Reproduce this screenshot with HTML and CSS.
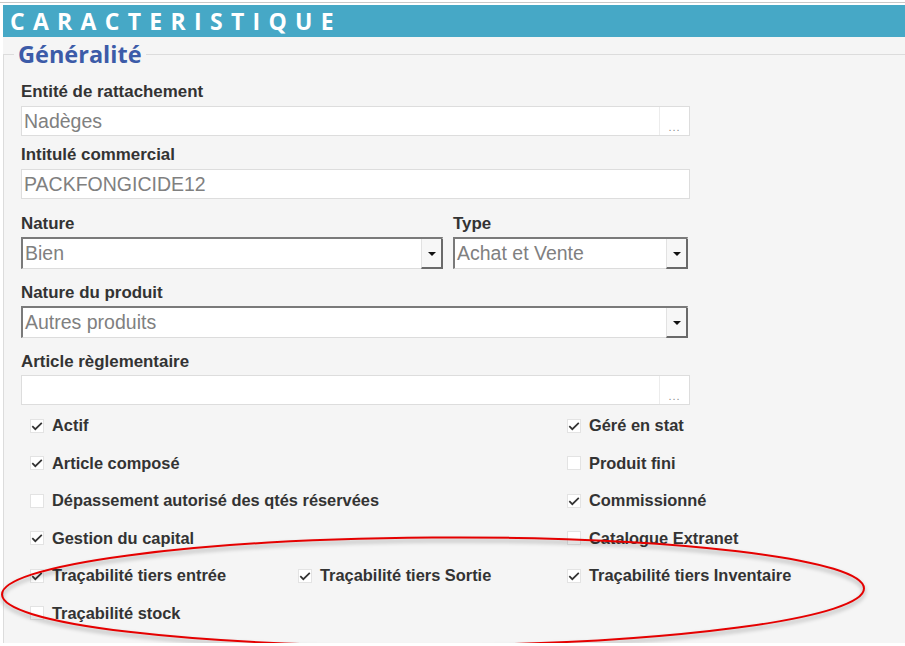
FILE: index.html
```html
<!DOCTYPE html>
<html lang="fr">
<head>
  <meta charset="UTF-8" />
  <title>Caractéristique</title>
  <link rel="stylesheet" href="styles.css">
</head>
<body>
  <div class="frame">
    <div class="titlebar">CARACTERISTIQUE</div>

    <div class="panel">
      <fieldset class="group">
        <legend>Généralité</legend>

        <div class="field f-entity">
          <label class="lbl">Entité de rattachement</label>
          <div class="textbox picker">
            <span class="val">Nadèges</span>
            <span class="dots">...</span>
          </div>
        </div>

        <div class="field f-name">
          <label class="lbl">Intitulé commercial</label>
          <div class="textbox"><span class="val">PACKFONGICIDE12</span></div>
        </div>

        <div class="field-row">
          <div class="field">
            <label class="lbl lbl-combo">Nature</label>
            <div class="combo w-nature">
              <span class="val">Bien</span>
              <span class="arrow"></span>
            </div>
          </div>
          <div class="field">
            <label class="lbl lbl-combo">Type</label>
            <div class="combo w-type">
              <span class="val">Achat et Vente</span>
              <span class="arrow"></span>
            </div>
          </div>
        </div>

        <div class="field f-product">
          <label class="lbl lbl-combo">Nature du produit</label>
          <div class="combo w-full">
            <span class="val">Autres produits</span>
            <span class="arrow"></span>
          </div>
        </div>

        <div class="field">
          <label class="lbl lbl-combo">Article règlementaire</label>
          <div class="textbox picker">
            <span class="val"></span>
            <span class="dots">...</span>
          </div>
        </div>

        <div class="checks">
          <div class="chk on"><span class="box"><svg viewBox="0 0 12 12"><path d="M1.3 6.2 L4.3 9.2 L10.8 2.8"/></svg></span>Actif</div>
          <div class="chk on c3"><span class="box"><svg viewBox="0 0 12 12"><path d="M1.3 6.2 L4.3 9.2 L10.8 2.8"/></svg></span>Géré en stat</div>

          <div class="chk on"><span class="box"><svg viewBox="0 0 12 12"><path d="M1.3 6.2 L4.3 9.2 L10.8 2.8"/></svg></span>Article composé</div>
          <div class="chk c3"><span class="box"></span>Produit fini</div>

          <div class="chk"><span class="box"></span>Dépassement autorisé des qtés réservées</div>
          <div class="chk on c3"><span class="box"><svg viewBox="0 0 12 12"><path d="M1.3 6.2 L4.3 9.2 L10.8 2.8"/></svg></span>Commissionné</div>

          <div class="chk on"><span class="box"><svg viewBox="0 0 12 12"><path d="M1.3 6.2 L4.3 9.2 L10.8 2.8"/></svg></span>Gestion du capital</div>
          <div class="chk c3"><span class="box"></span>Catalogue Extranet</div>

          <div class="chk on"><span class="box"><svg viewBox="0 0 12 12"><path d="M1.3 6.2 L4.3 9.2 L10.8 2.8"/></svg></span>Traçabilité tiers entrée</div>
          <div class="chk on"><span class="box"><svg viewBox="0 0 12 12"><path d="M1.3 6.2 L4.3 9.2 L10.8 2.8"/></svg></span>Traçabilité tiers Sortie</div>
          <div class="chk on"><span class="box"><svg viewBox="0 0 12 12"><path d="M1.3 6.2 L4.3 9.2 L10.8 2.8"/></svg></span>Traçabilité tiers Inventaire</div>

          <div class="chk"><span class="box"></span>Traçabilité stock</div>
        </div>
      </fieldset>
    </div>

    <!-- annotation drawn over the form -->
    <svg class="annot" width="905" height="646" viewBox="0 0 905 646">
      <ellipse cx="433" cy="591.5" rx="431" ry="54" transform="rotate(-0.4 433 591.5)" />
    </svg>
  </div>
</body>
</html>
```

FILE: styles.css
```css
body {
  margin: 0;
  background: #ffffff;
  font-family: "Liberation Sans", Arial, sans-serif;
  color: #333333;
  overflow: hidden;
}

.frame {
  position: relative;
  margin-top: 2px;
  border-top: 1px solid #c9c9c9;
  padding: 2px 0 0 3px;
  height: 641px;
  box-sizing: border-box;
}

.titlebar {
  height: 32px;
  background: #46a8c6;
  color: #ffffff;
  font-family: "Open Sans", sans-serif;
  font-weight: 700;
  font-size: 23px;
  line-height: 32px;
  letter-spacing: 8.3px;
  padding-left: 7px;
}

.panel {
  background: #f5f5f5;
  padding-top: 3px;
  height: 620px;
  overflow: hidden;
}

.group {
  margin: 0 -20px 0 0;
  padding: 15px 0 0 17px;
  border: 1px solid #dcdcdc;
  min-width: 0;
  height: 700px;
}

.group legend {
  font-family: "Open Sans", sans-serif;
  font-weight: 700;
  font-size: 23.5px;
  line-height: 28px;
  color: #3c5ba8;
  padding: 0 4px;
  margin-left: -7px;
}

.lbl {
  display: block;
  font-weight: 700;
  font-size: 16.9px;
  line-height: 18px;
  margin-bottom: 5px;
}

.lbl-combo {
  margin-bottom: 4px;
}

.f-entity { margin-bottom: 10px; }
.f-name { margin-bottom: 16px; }
.field-row { display: flex; gap: 10px; margin-bottom: 15px; }
.f-product { margin-bottom: 15px; }

.textbox {
  display: flex;
  width: 669px;
  height: 30px;
  box-sizing: border-box;
  border: 1px solid #dddddd;
  background: #ffffff;
}

.val {
  flex: 1;
  font-size: 19.5px;
  line-height: 28px;
  color: #808080;
  padding-left: 2px;
  white-space: nowrap;
}

.dots {
  width: 30px;
  border-left: 1px solid #ececec;
  font-size: 11px;
  line-height: 11px;
  color: #8a8a8a;
  letter-spacing: 1px;
  display: flex;
  align-items: flex-end;
  justify-content: center;
  padding-bottom: 2px;
  box-sizing: border-box;
}

.combo {
  display: flex;
  height: 32px;
  box-sizing: border-box;
  background: #ffffff;
  border-top: 2px solid #7a7a7a;
  border-left: 2px solid #7a7a7a;
  border-right: 1px solid #cfcfcf;
  border-bottom: 1px solid #dcdcdc;
}

.combo .val {
  line-height: 29px;
  padding-left: 2px;
}

.w-nature { width: 422px; }
.w-type { width: 235px; }
.w-full { width: 667px; }

.arrow {
  position: relative;
  width: 19px;
  margin-bottom: -1px;
  margin-right: -1px;
  background: #f7f7f7;
  border-left: 1px solid #e2e2e2;
  border-right: 2px solid #6a6a6a;
  border-bottom: 2px solid #6a6a6a;
}

.arrow::after {
  content: "";
  position: absolute;
  left: 6px;
  top: 13px;
  border-left: 4px solid transparent;
  border-right: 4px solid transparent;
  border-top: 4px solid #111111;
}

.checks {
  display: grid;
  grid-template-columns: 268px 269px 1fr;
  grid-auto-rows: 37.5px;
  padding-left: 9px;
  margin-top: 2px;
}

.chk {
  display: flex;
  align-items: center;
  gap: 8px;
  font-weight: 700;
  font-size: 16.4px;
  color: #333333;
  white-space: nowrap;
}

.c3 { grid-column: 3; }

.box {
  flex-shrink: 0;
  display: flex;
  align-items: center;
  justify-content: center;
  width: 14px;
  height: 14px;
  box-sizing: border-box;
  border: 1px solid #e3e3e3;
  background: #ffffff;
}

.box svg {
  width: 12px;
  height: 12px;
}

.box path {
  fill: none;
  stroke: #333333;
  stroke-width: 1.7;
}

.annot {
  position: absolute;
  left: 0;
  top: -3px;
  pointer-events: none;
  filter: drop-shadow(0 3px 2px rgba(0, 0, 0, 0.35));
}

.annot ellipse {
  fill: none;
  stroke: #e50000;
  stroke-width: 2;
}
```
